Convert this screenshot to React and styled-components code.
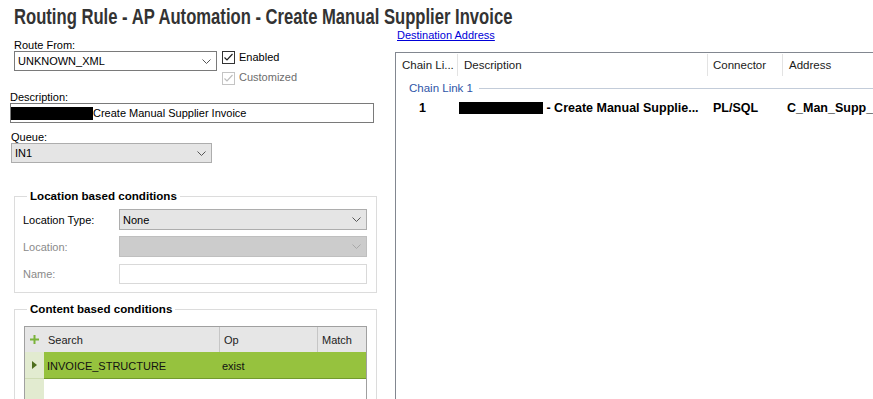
import React from "react";
import styled, { createGlobalStyle } from "styled-components";

const GlobalStyle = createGlobalStyle`
  html, body { margin: 0; padding: 0; background: #fff; }
  body { font-family: "Liberation Sans", Arial, sans-serif; font-size: 11px; color: #000; }
  * { box-sizing: border-box; }
`;

const Page = styled.div`
  width: 873px;
  height: 399px;
  overflow: hidden;
  display: flex;
  flex-direction: column;
`;

const TitleBar = styled.div`
  flex: none;
  height: 28px;
  padding: 5px 0 0 14px;
`;

// condensed heading: the original face is a narrow bold grotesque
const Title = styled.h1`
  display: inline-block;
  margin: 0;
  font-family: "Liberation Sans", Arial, sans-serif;
  font-weight: bold;
  font-size: 22px;
  line-height: 24px;
  color: #333;
  white-space: nowrap;
  transform: scaleX(0.756);
  transform-origin: left center;
`;

const Columns = styled.div`
  flex: 1;
  min-height: 0;
  display: flex;
`;

const LeftPane = styled.div`
  flex: none;
  width: 395px;
  padding: 11px 0 0 10px;
  display: flex;
  flex-direction: column;
`;

const RouteRow = styled.div`
  display: flex;
  gap: 5px;
  margin-left: 4px;
  height: 52px;
`;

const Field = styled.div`
  display: flex;
  flex-direction: column;
  margin-top: ${(p) => p.$top || 0}px;
  margin-left: ${(p) => p.$left || 0}px;
`;

const Label = styled.div`
  height: 12px;
  line-height: 12px;
  color: ${(p) => (p.$muted ? "#8a8a8a" : "#000")};
  white-space: nowrap;
`;

const selectLook = {
  white: { bg: "#fff", border: "#7a7a7a", chevron: "#555" },
  flat: { bg: "#e5e5e5", border: "#adadad", chevron: "#555" },
  disabled: { bg: "#cccccc", border: "#bfbfbf", chevron: "#a8a8a8" },
};

const SelectBox = styled.div`
  width: ${(p) => p.$w}px;
  height: ${(p) => p.$h || 20}px;
  display: flex;
  align-items: center;
  justify-content: space-between;
  padding: 0 5px 0 3px;
  background: ${(p) => selectLook[p.$look].bg};
  border: 1px solid ${(p) => selectLook[p.$look].border};
  white-space: nowrap;
`;

const Chevron = ({ color }) => (
  <svg width="9" height="5" viewBox="0 0 9 5">
    <polyline points="0.5,0.5 4.5,4.5 8.5,0.5" fill="none" stroke={color} strokeWidth="1" />
  </svg>
);

const Select = ({ value, w, h, look = "flat" }) => (
  <SelectBox $w={w} $h={h} $look={look}>
    <span>{value}</span>
    <Chevron color={selectLook[look].chevron} />
  </SelectBox>
);

const CheckColumn = styled.div`
  padding-top: 12px;
  display: flex;
  flex-direction: column;
`;

const CheckRow = styled.div`
  height: 21px;
  display: flex;
  align-items: flex-start;
  gap: 4px;
  line-height: 13px;
  color: ${(p) => (p.$disabled ? "#6d6d6d" : "#000")};
`;

const Box = styled.div`
  width: 13px;
  height: 13px;
  margin-top: ${(p) => (p.$disabled ? 1 : 0)}px;
  border: 1px solid ${(p) => (p.$disabled ? "#c4c4c4" : "#333")};
  background: #fff;
  display: flex;
  align-items: center;
  justify-content: center;
`;

const Check = ({ color }) => (
  <svg width="11" height="11" viewBox="0 0 11 11">
    <polyline points="1.5,5.5 4,8 9.5,2" fill="none" stroke={color} strokeWidth="1.2" />
  </svg>
);

const TextBox = styled.div`
  width: ${(p) => p.$w}px;
  height: 20px;
  display: flex;
  align-items: center;
  border: 1px solid ${(p) => p.$border || "#7a7a7a"};
  background: #fff;
  white-space: nowrap;
  overflow: hidden;
`;

const Redact = styled.span`
  display: inline-block;
  flex: none;
  width: ${(p) => p.$w}px;
  height: ${(p) => p.$h}px;
  margin-left: ${(p) => p.$ml || 0}px;
  background: #000;
`;

const Group = styled.fieldset`
  margin: ${(p) => p.$top}px 0 0 4px;
  width: 363px;
  min-width: 0;
  height: ${(p) => (p.$h ? `${p.$h}px` : "auto")};
  border: 1px solid #dcdcdc;
  padding: ${(p) => p.$pad};
`;

const Legend = styled.legend`
  margin-left: 4px;
  padding: 0 3px;
  font-weight: bold;
  font-size: 11.6px;
  line-height: 14px;
  color: #000;
`;

const FormGrid = styled.div`
  display: grid;
  grid-template-columns: 96px 248px;
  grid-auto-rows: 21px;
  row-gap: 6px;
  align-items: center;
`;

const CondGrid = styled.div`
  margin-left: 1px;
  display: grid;
  grid-template-columns: 19px 175px 98px 1fr;
  grid-template-rows: 25px 27px 40px;
  border: 1px solid #a0a0a0;
  border-bottom: none;
`;

const HeadCell = styled.div`
  background: #e6e6e6;
  display: flex;
  align-items: center;
  justify-content: ${(p) => (p.$center ? "center" : "flex-start")};
  padding-left: ${(p) => (p.$center ? 0 : 4)}px;
  border-left: ${(p) => (p.$divider ? "1px solid #c6c6c6" : "none")};
  color: #222;
`;

const RowHead = styled.div`
  background: #e2ebd0;
  display: flex;
  align-items: center;
  justify-content: center;
  border-bottom: ${(p) => (p.$line ? "1px solid #cfdcb4" : "none")};
`;

const DataCell = styled.div`
  background: ${(p) => (p.$selected ? "#96c23e" : "#fff")};
  border-bottom: ${(p) => (p.$selected ? "1px solid #729a2c" : "none")};
  display: flex;
  align-items: center;
  padding: 1px 0 0 3px;
  color: #111;
`;

const Plus = () => (
  <svg width="9" height="9" viewBox="0 0 9 9">
    <rect x="3.5" y="0" width="2" height="9" fill="#7bb33a" />
    <rect x="0" y="3.5" width="9" height="2" fill="#7bb33a" />
  </svg>
);

const Arrow = () => (
  <svg width="5" height="8" viewBox="0 0 5 8">
    <polygon points="0,0 5,4 0,8" fill="#4d6e1c" />
  </svg>
);

const RightPane = styled.div`
  flex: 1;
  min-width: 0;
  overflow: hidden;
  padding-top: 1px;
  display: flex;
  flex-direction: column;
`;

const Link = styled.a`
  margin-left: 2px;
  line-height: 12px;
  color: #0000d8;
  text-decoration: underline;
  align-self: flex-start;
`;

const ListPanel = styled.div`
  margin-top: 11px;
  flex: 1;
  width: 620px;
  border-left: 1px solid #828790;
  border-top: 1px solid #828790;
  background: #fff;
`;

const colTemplate = "61px 250px 75px 234px";

const ListHeader = styled.div`
  display: grid;
  grid-template-columns: ${colTemplate};
  height: 25px;
  font-size: 11.5px;
`;

const ListHeadCell = styled.div`
  display: flex;
  align-items: center;
  padding-left: ${(p) => p.$pad}px;
  border-left: ${(p) => (p.$divider ? "1px solid #e3e3e3" : "none")};
  margin: 1px 0 2px;
  color: #1a1a1a;
  white-space: nowrap;
`;

const GroupRow = styled.div`
  height: 20px;
  display: flex;
  align-items: center;
  padding-left: 13px;
  font-size: 11.5px;
  color: #2f56a8;
`;

const GroupLine = styled.div`
  flex: 1;
  height: 1px;
  margin-left: 6px;
  background: #c3ccd9;
`;

const ListRow = styled.div`
  display: grid;
  grid-template-columns: ${colTemplate};
  height: 20px;
  font-weight: bold;
  font-size: 12.5px;
  color: #000;
`;

const ListCell = styled.div`
  display: flex;
  align-items: center;
  padding-left: ${(p) => p.$pad}px;
  white-space: nowrap;
  overflow: hidden;
`;

export default function App() {
  return (
    <>
      <GlobalStyle />
      <Page>
        <TitleBar>
          <Title>Routing Rule - AP Automation - Create Manual Supplier Invoice</Title>
        </TitleBar>
        <Columns>
          <LeftPane>
            <RouteRow>
              <Field>
                <Label>Route From:</Label>
                <Select value="UNKNOWN_XML" w={203} look="white" />
              </Field>
              <CheckColumn>
                <CheckRow>
                  <Box>
                    <Check color="#222" />
                  </Box>
                  Enabled
                </CheckRow>
                <CheckRow $disabled>
                  <Box $disabled>
                    <Check color="#bdbdbd" />
                  </Box>
                  Customized
                </CheckRow>
              </CheckColumn>
            </RouteRow>

            <Field>
              <Label>Description:</Label>
              <TextBox $w={364}>
                <Redact $w={84} $h={13} $ml={-2} />
                Create Manual Supplier Invoice
              </TextBox>
            </Field>

            <Field $top={8} $left={1}>
              <Label>Queue:</Label>
              <Select value="IN1" w={201} />
            </Field>

            <Group $top={26} $pad="6px 9px 8px 8px">
              <Legend>Location based conditions</Legend>
              <FormGrid>
                <Label>Location Type:</Label>
                <Select value="None" w={248} h={21} />
                <Label $muted>Location:</Label>
                <Select value="" w={248} h={21} look="disabled" />
                <Label $muted>Name:</Label>
                <TextBox $w={248} $border="#d9d9d9" />
              </FormGrid>
            </Group>

            <Group $top={9} $h={130} $pad="10px 9px 0 8px">
              <Legend>Content based conditions</Legend>
              <CondGrid>
                <HeadCell $center>
                  <Plus />
                </HeadCell>
                <HeadCell>Search</HeadCell>
                <HeadCell $divider>Op</HeadCell>
                <HeadCell $divider>Match</HeadCell>

                <RowHead $line>
                  <Arrow />
                </RowHead>
                <DataCell $selected>INVOICE_STRUCTURE</DataCell>
                <DataCell $selected>exist</DataCell>
                <DataCell $selected />

                <RowHead />
                <DataCell />
                <DataCell />
                <DataCell />
              </CondGrid>
            </Group>
          </LeftPane>

          <RightPane>
            <Link href="#">Destination Address</Link>
            <ListPanel>
              <ListHeader>
                <ListHeadCell $pad={6}>Chain Li...</ListHeadCell>
                <ListHeadCell $pad={6} $divider>Description</ListHeadCell>
                <ListHeadCell $pad={5} $divider>Connector</ListHeadCell>
                <ListHeadCell $pad={6} $divider>Address</ListHeadCell>
              </ListHeader>
              <GroupRow>
                Chain Link 1
                <GroupLine />
              </GroupRow>
              <ListRow>
                <ListCell $pad={23}>1</ListCell>
                <ListCell $pad={2}>
                  <Redact $w={84} $h={12} />
                  &nbsp;- Create Manual Supplie...
                </ListCell>
                <ListCell $pad={6}>PL/SQL</ListCell>
                <ListCell $pad={5}>C_Man_Supp_Invoice</ListCell>
              </ListRow>
            </ListPanel>
          </RightPane>
        </Columns>
      </Page>
    </>
  );
}
